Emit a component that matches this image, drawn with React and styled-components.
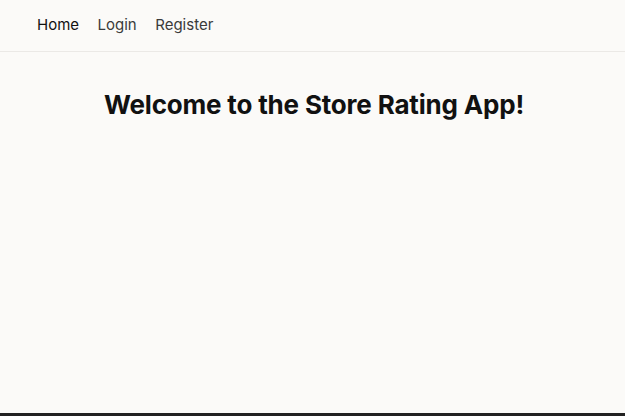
import React from 'react'
import styled, { createGlobalStyle } from 'styled-components';

const GlobalStyle = createGlobalStyle`
    html, body {
        margin:0;
        padding:0;
        background-color:#fbfaf8;
        font-family:Inter, "Liberation Sans", sans-serif;
    }
`

const App = () => {
    return (
        <>
            <GlobalStyle />
            <Page>
                <Nav>
                    <NavLink $active>Home</NavLink>
                    <NavLink>Login</NavLink>
                    <NavLink>Register</NavLink>
                </Nav>
                <Main>
                    <Title>Welcome to the Store Rating App!</Title>
                </Main>
                <BottomBar />
            </Page>
        </>
    )
}

export default App

const Page = styled.div`
    min-height:416px;
    display:flex;
    flex-direction:column;
`
const Nav = styled.nav`
    height:52px;
    display:flex;
    align-items:center;
    gap:18.5px;
    padding:0 37px 2px;
    border-bottom:1px solid #ebe9e6;
    box-sizing:border-box;
`
const NavLink = styled.a`
    font-size:15px;
    color:${p => p.$active ? '#111' : '#3a3a3a'};
    text-decoration:none;
    cursor:pointer;
`
const Main = styled.main`
    flex:1;
    display:flex;
    flex-direction:column;
    align-items:center;
    padding:37px 0 0 3px;
`
const Title = styled.h1`
    margin:0;
    font-size:26px;
    font-weight:700;
    color:#111;
    letter-spacing:-0.18px;
`
const BottomBar = styled.div`
    height:3px;
    background-color:#222;
`
